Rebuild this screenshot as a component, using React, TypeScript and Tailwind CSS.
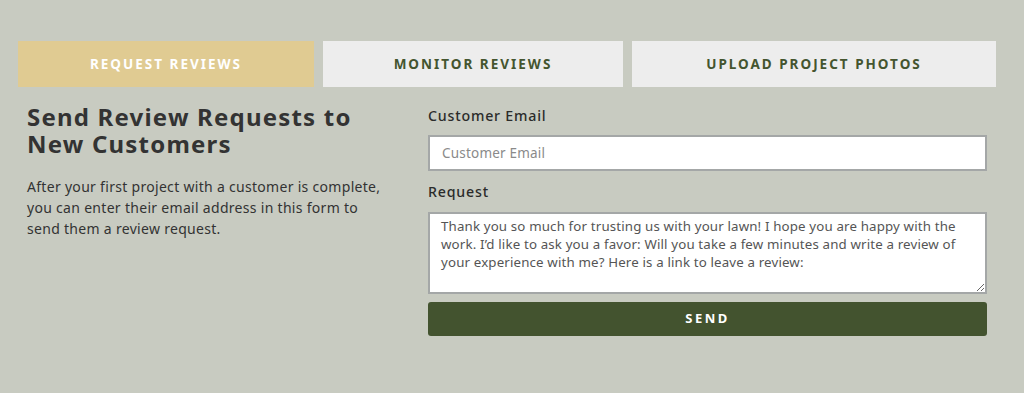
export default function App() {
  const tabs = [
    { label: 'REQUEST REVIEWS', width: 'w-[296px]', active: true },
    { label: 'MONITOR REVIEWS', width: 'w-[300px]', active: false },
    { label: 'UPLOAD PROJECT PHOTOS', width: 'w-[364px]', active: false },
  ]

  return (
    <div
      className="min-h-[393px] w-full bg-[#c8cbc1] pt-[41px] pl-[18px]"
      style={{ fontFamily: '"Noto Sans", "Open Sans", sans-serif' }}
    >
      {/* tabs */}
      <div className="flex gap-[9px]">
        {tabs.map((tab) => (
          <button
            key={tab.label}
            className={`${tab.width} h-[46px] text-[13.5px] font-bold tracking-[2px] ${
              tab.active ? 'bg-[#e0cb92] text-white' : 'bg-[#ededed] text-[#44552f]'
            }`}
          >
            {tab.label}
          </button>
        ))}
      </div>

      <div className="flex">
        {/* intro */}
        <div className="w-[410px] pl-[9px] pt-[16px]">
          <h1 className="text-[24px] font-bold leading-[27px] tracking-[1.2px] text-[#333333]">
            Send Review Requests to
            <br />
            New Customers
          </h1>
          <p className="mt-[19px] w-[362px] text-[14px] leading-[21px] tracking-[0.3px] text-[#333333]">
            After your first project with a customer is complete, you can enter their email address in
            this form to send them a review request.
          </p>
        </div>

        {/* form */}
        <div className="w-[559px] pt-[19px]">
          <label className="block text-[14.2px] font-medium leading-[20px] tracking-[0.8px] text-[#2b2b2b]">
            Customer Email
          </label>
          <input
            type="email"
            placeholder="Customer Email"
            className="mt-[9px] block h-[36px] w-full border-2 border-[#a4a7a7] bg-white px-[12px] text-[13.5px] tracking-[0.2px] text-[#555555] placeholder:text-[#8a8a8a] outline-none"
          />
          <label className="mt-[11px] block text-[14.2px] font-medium leading-[20px] tracking-[0.8px] text-[#2b2b2b]">
            Request
          </label>
          <textarea
            className="mt-[10px] block h-[82px] w-full resize-y border-2 border-[#a4a7a7] bg-white px-[11px] pt-[3px] text-[13.3px] leading-[18px] tracking-[0.15px] text-[#555555] outline-none"
            defaultValue="Thank you so much for trusting us with your lawn! I hope you are happy with the work. I’d like to ask you a favor: Will you take a few minutes and write a review of your experience with me? Here is a link to leave a review:"
          />
          <button className="mt-[8px] h-[34px] w-full rounded-[3px] bg-[#43532f] text-[13px] font-bold tracking-[2.5px] text-white">
            SEND
          </button>
        </div>
      </div>
    </div>
  )
}
